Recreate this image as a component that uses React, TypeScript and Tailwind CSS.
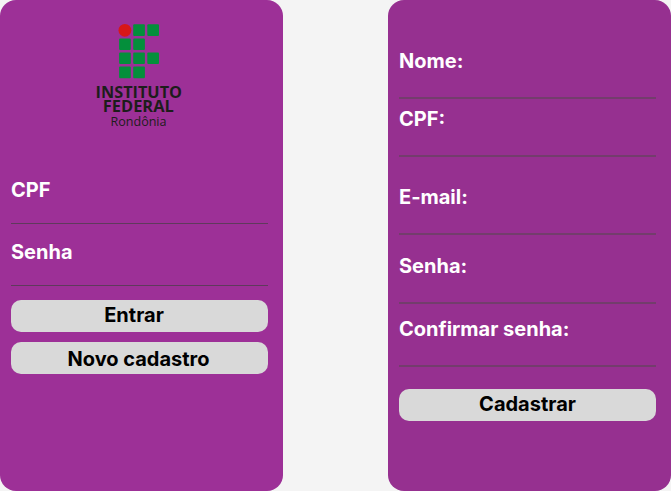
import React from "react";

const squares: [number, number][] = [
  [53.2, 14.2], [67.3, 14.2],
  [39.1, 28.4], [53.2, 28.4],
  [39.1, 42.4], [53.2, 42.4], [67.3, 42.4],
  [39.1, 56.6], [53.2, 56.6],
];

function Logo() {
  return (
    <svg className="ml-[69px] block h-[122px] w-[118px] shrink-0" viewBox="0 0 118 122" role="img" aria-label="Instituto Federal Rondônia">
      <circle cx="44.9" cy="20.3" r="6.4" fill="#d71718" />
      {squares.map(([x, y]) => (
        <rect key={`${x}-${y}`} x={x} y={y} width="11.7" height="11.7" rx="1" fill="#048f3b" />
      ))}
      <g fill="#1d1d1b" fontFamily="'Open Sans', sans-serif">
        <text x="15.6" y="88.2" fontSize="15.5" fontWeight="700" textLength="86.4" lengthAdjust="spacingAndGlyphs">INSTITUTO</text>
        <text x="22.8" y="102.2" fontSize="15.5" fontWeight="700" textLength="71" lengthAdjust="spacingAndGlyphs">FEDERAL</text>
        <text x="30.5" y="116" fontSize="12.5" fontWeight="400" textLength="56" lengthAdjust="spacingAndGlyphs">Rondônia</text>
      </g>
    </svg>
  );
}

function Field({ label, className }: { label: string; className: string }) {
  return (
    <div className={`flex w-full shrink-0 items-start text-white ${className}`}>
      <label className="whitespace-nowrap">{label}</label>
    </div>
  );
}

function Button({ label, className }: { label: string; className: string }) {
  return (
    <button className={`flex h-8 w-full shrink-0 justify-center rounded-[10px] bg-[#d9d9d9] text-black ${className}`}>
      {label}
    </button>
  );
}

const thin = "h-[46px] border-b border-[#5f3a5c]";
const thick = "h-[50px] border-b-2 border-[#733d6c]";

export default function App() {
  return (
    <main className="flex h-[491px] w-[671px] justify-between overflow-hidden bg-[#f4f4f4] font-['Inter',sans-serif] text-[20px] leading-6 font-bold">
      <section className="flex w-[283px] flex-col rounded-[16px] bg-[#9d3097] pt-[10px] pr-[15px] pl-[11px]">
        <Logo />
        <Field label="CPF" className={`mt-[46px] ${thin}`} />
        <Field label="Senha" className={`mt-4 ${thin}`} />
        <Button label="Entrar" className="mt-[14px] pt-[3px] pr-[11px]" />
        <Button label="Novo cadastro" className="mt-[10px] pt-[5px] pr-[2px]" />
      </section>
      <section className="flex w-[283px] flex-col rounded-[16px] bg-[#963090] pt-[49px] pr-[15px] pl-[11px]">
        <Field label="Nome:" className={thick} />
        <Field label="CPF:" className={`mt-2 ${thick}`} />
        <Field label="E-mail:" className={`mt-7 ${thick}`} />
        <Field label="Senha:" className={`mt-[19px] ${thick}`} />
        <Field label="Confirmar senha:" className={`mt-[13px] ${thick}`} />
        <Button label="Cadastrar" className="mt-[22px] pt-[3px]" />
      </section>
    </main>
  );
}
